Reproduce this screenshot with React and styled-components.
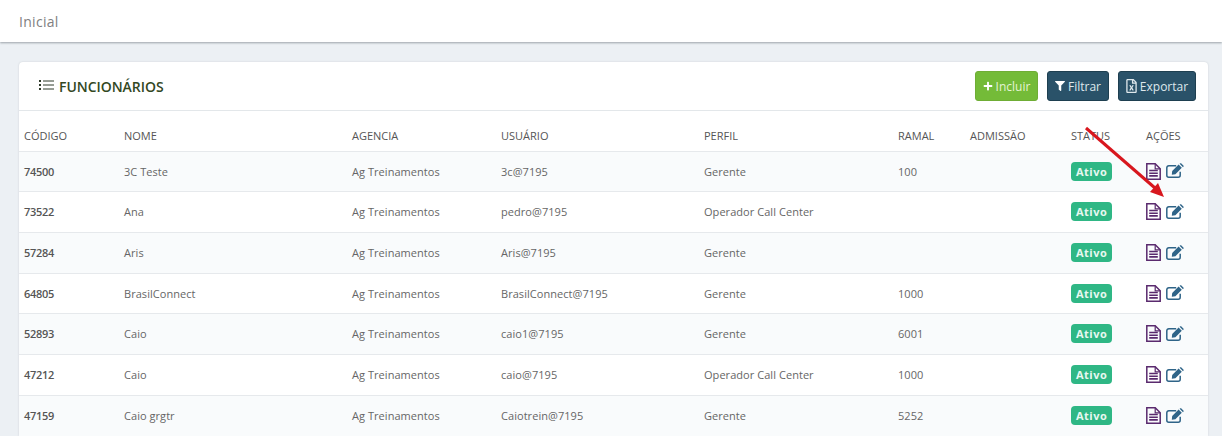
import styled, { createGlobalStyle } from 'styled-components';
import { FaPlus, FaFilter, FaRegFileExcel } from 'react-icons/fa';

const GlobalStyle = createGlobalStyle`
  html, body {
    margin: 0;
    padding: 0;
    height: 436px;
    overflow: hidden;
    background: #ecf0f4;
    font-family: "Open Sans", "Liberation Sans", sans-serif;
  }
`;

const Page = styled.div`
  position: relative;
  width: 1222px;
  height: 436px;
  overflow: hidden;
`;

const TopBar = styled.header`
  height: 42px;
  padding-left: 19px;
  display: flex;
  align-items: center;
  background: #fff;
  box-shadow: 0 1px 2px rgba(60, 70, 80, 0.45);
  color: #808080;
  font-size: 14px;
  letter-spacing: 0.3px;
`;

const Card = styled.section`
  margin: 20px 14px 0 19px;
  background: #fff;
  border-radius: 4px 4px 0 0;
  box-shadow: 0 0 2px rgba(60, 70, 80, 0.2);
`;

const CardHead = styled.div`
  height: 48px;
  padding: 0 12px 0 20px;
  display: flex;
  align-items: center;
  justify-content: space-between;
  border-bottom: 1px solid #e3e7ea;
`;

const Title = styled.h2`
  margin: 0;
  display: flex;
  align-items: center;
  gap: 5px;
  font-size: 14px;
  font-weight: 600;
  letter-spacing: -0.05px;
  color: #33481f;
`;

const ListIcon = styled.svg`
  width: 15px;
  height: 10px;
  margin-top: -3px;
  color: #2f3a2a;
`;

const Buttons = styled.div`
  display: flex;
  gap: 9px;
`;

const Button = styled.button`
  box-sizing: border-box;
  width: ${(p) => p.$w}px;
  height: 30px;
  padding: 0;
  display: flex;
  align-items: center;
  justify-content: center;
  gap: 3px;
  border-radius: 3px;
  border: 1px solid ${(p) => (p.$green ? '#6fad35' : '#1e3f50')};
  background: ${(p) => (p.$green ? '#74bb38' : '#2a5269')};
  color: ${(p) => (p.$green ? '#e4f3d4' : '#dfe8ec')};
  font-family: inherit;
  font-size: 12px;
`;

const ExcelIcon = styled(FaRegFileExcel)`
  width: 11px;
  height: 14px;
`;

const Table = styled.table`
  width: 1189px;
  border-collapse: collapse;
  table-layout: fixed;
`;

const Th = styled.th`
  width: ${(p) => p.$w}px;
  height: 40px;
  padding: 10px 0 0 5px;
  box-sizing: border-box;
  text-align: left;
  font-size: 11px;
  font-weight: 400;
  color: #555;
`;

const Row = styled.tr`
  height: ${(p) => p.$h}px;
  border-top: 1px solid #e6e9ec;
  background: ${(p) => (p.$odd ? '#f9fbfc' : '#fff')};
`;

const Td = styled.td`
  padding: 0 0 0 5px;
  font-size: 11px;
  font-weight: 400;
  letter-spacing: 0.05px;
  color: #666;
  white-space: nowrap;
`;

const CodeCell = styled(Td)`
  font-weight: 600;
  letter-spacing: -0.3px;
  color: #555;
`;

const Badge = styled.span`
  display: inline-block;
  padding: 0 5px;
  line-height: 19px;
  border-radius: 4px;
  background: #2fb785;
  color: #e8f8f1;
  font-size: 11px;
  font-weight: 700;
  letter-spacing: 0.5px;
`;

const Actions = styled.div`
  display: flex;
  align-items: center;
  gap: 5px;
`;

const DocSvg = styled.svg`
  width: 15px;
  height: 17px;
  color: #5a2a6e;
`;

const EditSvg = styled.svg`
  width: 18px;
  height: 15px;
  margin-top: -1px;
  color: #2f6488;
`;

const Arrow = styled.svg`
  position: absolute;
  left: 0;
  top: 0;
  pointer-events: none;
`;

const columns = [
  ['CÓDIGO', 100],
  ['NOME', 228],
  ['AGENCIA', 149],
  ['USUÁRIO', 203],
  ['PERFIL', 194],
  ['RAMAL', 72],
  ['ADMISSÃO', 101],
  ['STATUS', 75],
  ['AÇÕES', 67],
];

const rows = [
  ['74500', '3C Teste', '3c@7195', 'Gerente', '100', 40],
  ['73522', 'Ana', 'pedro@7195', 'Operador Call Center', '', 41],
  ['57284', 'Aris', 'Aris@7195', 'Gerente', '', 41],
  ['64805', 'BrasilConnect', 'BrasilConnect@7195', 'Gerente', '1000', 40],
  ['52893', 'Caio', 'caio1@7195', 'Gerente', '6001', 41],
  ['47212', 'Caio', 'caio@7195', 'Operador Call Center', '1000', 41],
  ['47159', 'Caio grgtr', 'Caiotrein@7195', 'Gerente', '5252', 41],
];

const DocIcon = () => (
  <DocSvg viewBox="0 0 15 17">
    <path d="M.8.8h8.4l5 5v10.4H.8z" fill="none" stroke="currentColor" strokeWidth="1.5" />
    <path d="M9.2.8v5h5" fill="none" stroke="currentColor" strokeWidth="1.2" />
    <path d="M3.2 7.5h8.6M3.2 10.2h8.6M3.2 12.9h8.6" stroke="currentColor" strokeWidth="1.6" />
  </DocSvg>
);

const EditIcon = () => (
  <EditSvg viewBox="0 0 18 15">
    <path
      d="M14.2 8.8v3.4a2 2 0 0 1-2 2H2.8a2 2 0 0 1-2-2V4.8a2 2 0 0 1 2-2h7.4"
      fill="none"
      stroke="currentColor"
      strokeWidth="1.5"
    />
    <path d="M6.2 8 12.6 1.6l3.2 3.2-6.4 6.4-3.6.5zM13.6.7l.7-.5h.8l2.5 2.5v.8l-.6.8z" fill="currentColor" />
  </EditSvg>
);

export default function App() {
  return (
    <Page>
      <GlobalStyle />
      <TopBar>Inicial</TopBar>
      <Card>
        <CardHead>
          <Title>
            <ListIcon viewBox="0 0 15 10">
              <path d="M0 0h2v2H0zM0 4h2v2H0zM0 8h2v2H0z" fill="currentColor" />
              <path d="M4 1h11M4 5h11M4 9h11" stroke="currentColor" strokeWidth="1" />
            </ListIcon>
            FUNCIONÁRIOS
          </Title>
          <Buttons>
            <Button $green $w={63}>
              <FaPlus size={10} color="#fff" />
              Incluir
            </Button>
            <Button $w={62}>
              <FaFilter size={10} color="#fff" />
              Filtrar
            </Button>
            <Button $w={78}>
              <ExcelIcon />
              Exportar
            </Button>
          </Buttons>
        </CardHead>
        <Table>
          <thead>
            <tr>
              {columns.map(([label, w]) => (
                <Th key={label} $w={w}>{label}</Th>
              ))}
            </tr>
          </thead>
          <tbody>
            {rows.map((r, i) => (
              <Row key={r[0]} $odd={i % 2 === 0} $h={r[5]}>
                <CodeCell>{r[0]}</CodeCell>
                <Td>{r[1]}</Td>
                <Td>Ag Treinamentos</Td>
                <Td>{r[2]}</Td>
                <Td>{r[3]}</Td>
                <Td>{r[4]}</Td>
                <Td />
                <Td><Badge>Ativo</Badge></Td>
                <Td>
                  <Actions>
                    <DocIcon />
                    <EditIcon />
                  </Actions>
                </Td>
              </Row>
            ))}
          </tbody>
        </Table>
      </Card>
      <Arrow width="1222" height="436" viewBox="0 0 1222 436">
        <line x1="1086" y1="128" x2="1155" y2="188" stroke="#d8171e" strokeWidth="3" />
        <polygon points="1164,197 1150,192 1158,183" fill="#d8171e" />
      </Arrow>
    </Page>
  );
}
